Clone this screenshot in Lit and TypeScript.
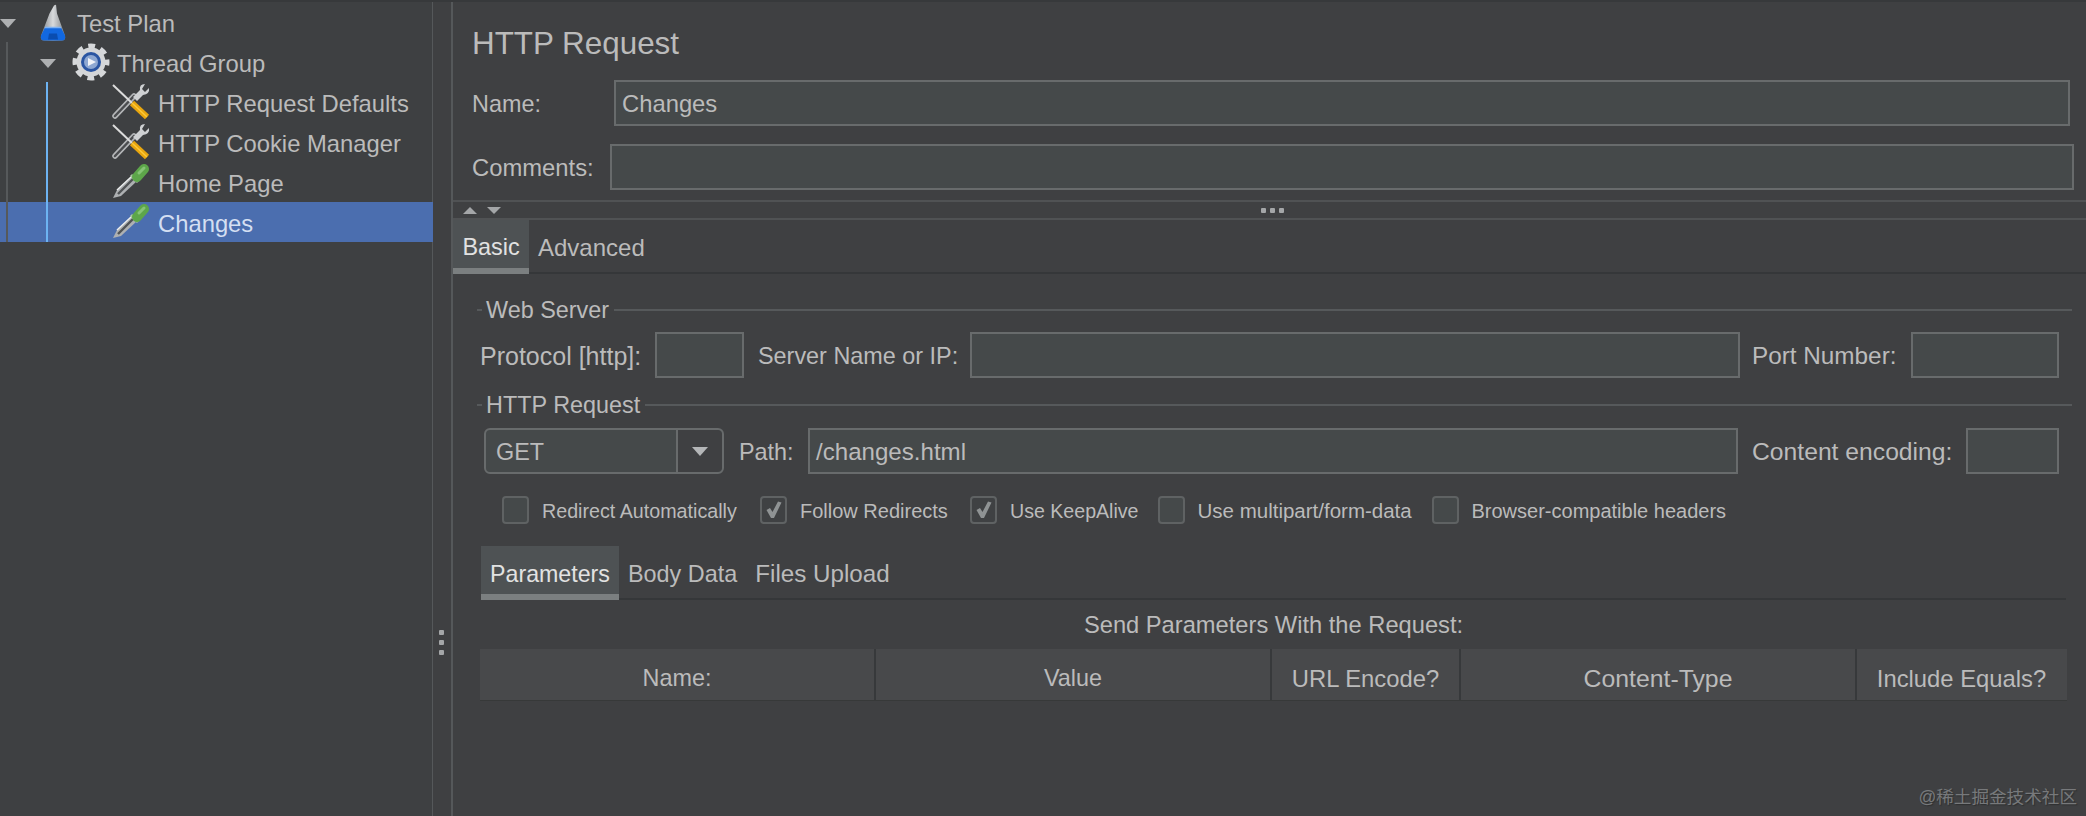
import { LitElement, html, css, svg } from "lit";
import { customElement } from "lit/decorators.js";

const flask = html`<svg class="ic" style="width:26px;height:37px;margin-top:1px" viewBox="0 0 26 37"><defs><linearGradient id="fg" x1="0" x2="1"><stop offset="0" stop-color="#7d8286"/><stop offset=".5" stop-color="#d8dadc"/><stop offset="1" stop-color="#7c8185"/></linearGradient></defs>
<path d="M9.5 9 L14 1 L16 0 L17 9 L25 31 Q26 36 22 36 L4 36 Q0 36 1 31 Z" fill="url(#fg)"/>
<path d="M5 23 L21 23 L25 31 Q26 36 22 36 L4 36 Q0 36 1 31 Z" fill="#1268e0"/><path d="M9 29 L17 29 L18 35 L8 35 Z" fill="#0a4db0"/><path d="M5 23 H21" stroke="#7fb2f2" stroke-width="1.5"/></svg>`;

const gear = html`<svg class="ic" style="width:38px;height:38px" viewBox="0 0 38 38">
<circle cx="19" cy="19" r="15.5" fill="none" stroke="#d6d8da" stroke-width="6" stroke-dasharray="6.6 5.6" stroke-dashoffset="3.3"/>
<circle cx="19" cy="19" r="14.5" fill="#d4d6d8"/><circle cx="19" cy="19" r="10" fill="#2a55a2"/><circle cx="19" cy="19" r="7" fill="#8ea8d2"/><path d="M16 15 L24 19 L16 23 Z" fill="#f0f3f8"/></svg>`;

const tools = html`<svg class="ic" style="width:38px;height:38px" viewBox="0 0 38 38">
<path d="M3 33 L22 13" stroke="#b4b6b8" stroke-width="5.5" stroke-linecap="round"/><path d="M3 33 L22 13" stroke="#4b4d4f" stroke-width="2.5" stroke-linecap="round"/>
<path d="M21 14 L28 7 Q27 1 33 1 L30 6 L33 9 L37 5 Q38 11 31 12 L25 18 Z" fill="#cfd1d3"/>
<path d="M1 2 L20 20" stroke="#dcdcdc" stroke-width="2"/><path d="M20 20 L35 34" stroke="#e8a60e" stroke-width="6"/><path d="M20 20 L35 34" stroke="#fbc93c" stroke-width="1.5"/></svg>`;

const pipette = html`<svg class="ic" style="width:38px;height:38px" viewBox="0 0 38 38">
<path d="M1 35 L5 27 L20 13 L25 18 L9 33 Z" fill="#adb0b2"/><path d="M6 31 L21 16" stroke="#505355" stroke-width="2.4"/><path d="M5 27 L19 14" stroke="#eceeee" stroke-width="1.4"/>
<path d="M19 12 L26 19" stroke="#a8c9a0" stroke-width="3"/><path d="M25 14 L32 6" stroke="#5da64a" stroke-width="10" stroke-linecap="round"/><path d="M27 10 L32 5" stroke="#86c476" stroke-width="3" stroke-linecap="round"/></svg>`;

const check = svg`<svg class="ck" viewBox="0 0 26 26"><path d="M5.5 13 L9 11 L11.5 15 L17 4.5 L20.5 5.5 L13 21 L10 21 Z" fill="#8f9394"/></svg>`;

const rows = [
  { t: "Test Plan", x: 40, tx: 77, icon: flask, arrow: 0, cls: "" },
  { t: "Thread Group", x: 72, tx: 117, icon: gear, arrow: 40, cls: "" },
  { t: "HTTP Request Defaults", x: 112, tx: 158, icon: tools, arrow: -1, cls: "" },
  { t: "HTTP Cookie Manager", x: 112, tx: 158, icon: tools, arrow: -1, cls: "" },
  { t: "Home Page", x: 112, tx: 158, icon: pipette, arrow: -1, cls: "" },
  { t: "Changes", x: 112, tx: 158, icon: pipette, arrow: -1, cls: "sel" },
];

const opts = [
  { t: "Redirect Automatically", on: false, w: 258, fs: 19.7 },
  { t: "Follow Redirects", on: true, w: 210, fs: 20 },
  { t: "Use KeepAlive", on: true, w: 187.5, fs: 19.6 },
  { t: "Use multipart/form-data", on: false, w: 274, fs: 20.5 },
  { t: "Browser-compatible headers", on: false, w: 300, fs: 20 },
];

const cols = [
  { t: "Name:", w: 396, fs: 23.4 }, { t: "Value", w: 396, fs: 23.4 }, { t: "URL Encode?", w: 189, fs: 23.8 },
  { t: "Content-Type", w: 396, fs: 24.8 }, { t: "Include Equals?", w: 209, fs: 23.8 },
];

@customElement("app-root")
export class AppRoot extends LitElement {
  static styles = css`
    :host { display: block; width: 2086px; height: 816px; overflow: hidden; position: relative;
      background: #3f4042; color: #bbbbbb; font-family: "Liberation Sans", Arial, sans-serif; font-size: 23.8px; }
    * { box-sizing: border-box; }
    .app { display: flex; height: 816px; border-top: 2px solid #37393b; }
    .tree { width: 433px; flex: none; position: relative; background: #3e4042; border-right: 1px solid #55585a; }
    .row { height: 40px; display: flex; align-items: center; position: relative; }
    .row.sel { background: #4b6eaf; color: #d4dff2; margin-right: -1px; }
    .row .ic { position: absolute; top: 50%; transform: translateY(-50%); filter: blur(0.4px); }
    .row .lb { position: absolute; top: 50%; transform: translateY(-50%); margin-top: 2px; white-space: nowrap; }
    .icw { position: absolute; top: 0; height: 100%; }
    .tri { position: absolute; width: 0; height: 0; border-left: 8px solid transparent; border-right: 8px solid transparent; border-top: 9px solid #aeb0b2; top: 50%; margin-top: -3px; }
    .guide { position: absolute; left: 6px; top: 40px; width: 2px; height: 200px; background: #56595b; z-index: 1; }
    .guide2 { position: absolute; left: 46px; top: 80px; width: 2px; height: 160px; background: #6db3f2; z-index: 1; }
    .split { width: 18px; flex: none; display: flex; flex-direction: column; align-items: center; justify-content: flex-start; gap: 5px; background: #3f4042; padding: 628px 2px 0 0; }
    .split i { width: 5px; height: 5px; background: #a4a6a8; display: block; border-radius: 1px; }
    .main { flex: 1; min-width: 0; border-left: 2px solid #55585a; }
    .head { height: 198px; padding: 0 0 0 19px; display: flex; flex-direction: column; }
    .title { font-size: 31.4px; height: 78px; line-height: 83px; white-space: nowrap; }
    .frow { display: flex; align-items: center; height: 46px; }
    .frow.c { margin-top: 18px; }
    .frow .l1 { flex: none; width: 142px; font-size: 23.4px; padding-top: 2px; }
    .frow .l2 { flex: none; width: 138px; padding-top: 2px; }
    .inp { height: 46px; background: #45494a; border: 2px solid #686b6c; display: flex; align-items: center; padding: 2px 6px 0; flex: none; white-space: nowrap; }
    .hs { height: 20px; border-top: 2px solid #505254; border-bottom: 2px solid #505254; display: flex; align-items: center; position: relative; padding-left: 10px; gap: 10px; }
    .up, .dn { width: 0; height: 0; border-left: 7px solid transparent; border-right: 7px solid transparent; }
    .up { border-bottom: 7px solid #a4a6a8; }
    .dn { border-top: 7px solid #a4a6a8; }
    .hd { position: absolute; left: 808px; top: 6px; display: flex; gap: 4px; }
    .hd i { width: 5px; height: 5px; display: block; background: #a4a6a8; border-radius: 1px; }
    .tabs { display: flex; height: 54px; border-bottom: 2px solid #353739; align-items: stretch; }
    .tab { display: flex; align-items: center; padding-top: 3px; white-space: nowrap; color: #bbb; }
    .tab.on { background: #4e5254; color: #e2e2e2; border-bottom: 6px solid #7b7f80; padding-top: 7px; margin-bottom: -2px; font-size: 23.4px; }
    .tab.basic { width: 76px; justify-content: center; }
    .tab.adv { margin-left: 9px; font-size: 24px; }
    .sub { padding-left: 28px; width: 100%; }
    .sub .tabs { margin-right: 20px; }
    .tab.pa { width: 138px; justify-content: center; font-size: 23.2px; padding-top: 8px; }
    .tab.bd { margin-left: 9px; font-size: 23.4px; padding-top: 4px; }
    .tab.fu { margin-left: 18px; font-size: 24.2px; }
    .group { display: flex; align-items: center; height: 30px; margin-left: 24px; margin-right: 14px; white-space: nowrap; font-size: 23.4px; }
    .group .tk { width: 5px; height: 2px; background: #56595b; margin-right: 4px; flex: none; }
    .group .ln { flex: 1; height: 2px; background: #56595b; margin-left: 5px; }
    .g1 { margin-top: 21px; }
    .g2 { margin-top: 12px; }
    .line { display: flex; align-items: center; height: 46px; white-space: nowrap; }
    .line > span { flex: none; padding-top: 2px; }
    .l-web { padding-left: 27px; margin-top: 7px; }
    .l-req { padding-left: 31px; margin-top: 8px; }
    .proto { width: 175px; font-size: 25px; }
    .srv { width: 212px; font-size: 23.4px; }
    .port { width: 159px; font-size: 24.3px; }
    .path { width: 69px; font-size: 23.4px; }
    .enc { width: 214px; font-size: 24.7px; }
    .sp { width: 14px; }
    .sp.w { width: 12px; }
    .sp.x { width: 15px; }
    .combo { width: 240px; height: 46px; flex: none; border: 2px solid #686b6c; border-radius: 6px; background: #45494a; display: flex; }
    .combo .v { flex: 1; display: flex; align-items: center; padding: 2px 0 0 10px; border-right: 2px solid #686b6c; font-size: 23.4px; }
    .combo .b { width: 44px; flex: none; background: #3f4042; border-radius: 0 5px 5px 0; display: flex; align-items: center; justify-content: center; }
    .combo .b i { width: 0; height: 0; display: block; border-left: 8px solid transparent; border-right: 8px solid transparent; border-top: 9px solid #b4b6b8; }
    .opts { display: flex; height: 28px; margin-top: 22px; padding-left: 49px; align-items: center; }
    .opt { display: flex; align-items: center; flex: none; white-space: nowrap; }
    .opt .tx { padding-top: 2px; }
    .box { width: 27px; height: 28px; flex: none; border: 2px solid #5f6263; border-radius: 4px; background: #45494a; margin-right: 13px; position: relative; }
    .box.on { background: #3f4143; }
    .ck { position: absolute; inset: -1px; width: 26px; height: 26px; }
    .sub.wrap { margin-top: 22px; }
    .send { height: 49px; line-height: 50px; text-align: center; white-space: nowrap; padding-right: 20px; font-size: 23.7px; }
    .thead { display: flex; height: 52px; background: #48494b; width: 1587px; margin-left: -1px; border-bottom: 1px solid #373939; }
    .th { display: flex; align-items: center; justify-content: center; flex: none; border-right: 2px solid #37393b; white-space: nowrap; padding-top: 8px; }
    .th:last-child { border-right: none; }
    .wm { position: absolute; right: 9px; bottom: 8px; font-size: 17.6px; color: #77797b; font-family: "Liberation Sans", "Noto Sans CJK SC", sans-serif; white-space: nowrap; text-shadow: 1px 1px 1px #2e2f30; }
  `;

  render() {
    return html`<div class="app">
      <div class="tree">
        <div class="guide"></div><div class="guide2"></div>
        ${rows.map((r) => html`<div class="row ${r.cls}">
          ${r.arrow >= 0 ? html`<span class="tri" style="left:${r.arrow}px"></span>` : ""}
          <span class="icw" style="left:${r.x}px">${r.icon}</span>
          <span class="lb" style="left:${r.tx}px">${r.t}</span>
        </div>`)}
      </div>
      <div class="split"><i></i><i></i><i></i></div>
      <div class="main">
        <div class="head">
          <div class="title">HTTP Request</div>
          <div class="frow"><span class="l1">Name:</span><div class="inp" style="width:1456px">Changes</div></div>
          <div class="frow c"><span class="l2">Comments:</span><div class="inp" style="width:1464px"></div></div>
        </div>
        <div class="hs"><span class="up"></span><span class="dn"></span><div class="hd"><i></i><i></i><i></i></div></div>
        <div class="tabs"><div class="tab on basic">Basic</div><div class="tab adv">Advanced</div></div>
        <div class="group g1"><span class="tk"></span><span>Web Server</span><span class="ln"></span></div>
        <div class="line l-web">
          <span class="proto">Protocol [http]:</span>
          <div class="inp" style="width:89px"></div>
          <span class="sp"></span>
          <span class="srv">Server Name or IP:</span>
          <div class="inp" style="width:770px"></div>
          <span class="sp w"></span>
          <span class="port">Port Number:</span>
          <div class="inp" style="width:148px"></div>
        </div>
        <div class="group g2"><span class="tk"></span><span>HTTP Request</span><span class="ln"></span></div>
        <div class="line l-req">
          <div class="combo"><div class="v">GET</div><div class="b"><i></i></div></div>
          <span class="sp x"></span>
          <span class="path">Path:</span>
          <div class="inp" style="width:930px;font-size:24.1px">/changes.html</div>
          <span class="sp"></span>
          <span class="enc">Content encoding:</span>
          <div class="inp" style="width:93px"></div>
        </div>
        <div class="opts">${opts.map((o) => html`<div class="opt" style="width:${o.w}px"><span class="box ${o.on ? "on" : ""}">${o.on ? check : ""}</span><span class="tx" style="font-size:${o.fs}px">${o.t}</span></div>`)}</div>
        <div class="sub wrap">
          <div class="tabs"><div class="tab on pa">Parameters</div><div class="tab bd">Body Data</div><div class="tab fu">Files Upload</div></div>
          <div class="send">Send Parameters With the Request:</div>
          <div class="thead">${cols.map((c) => html`<div class="th" style="width:${c.w}px;font-size:${c.fs}px">${c.t}</div>`)}</div>
        </div>
      </div>
    </div>
    <div class="wm">@稀土掘金技术社区</div>`;
  }
}
